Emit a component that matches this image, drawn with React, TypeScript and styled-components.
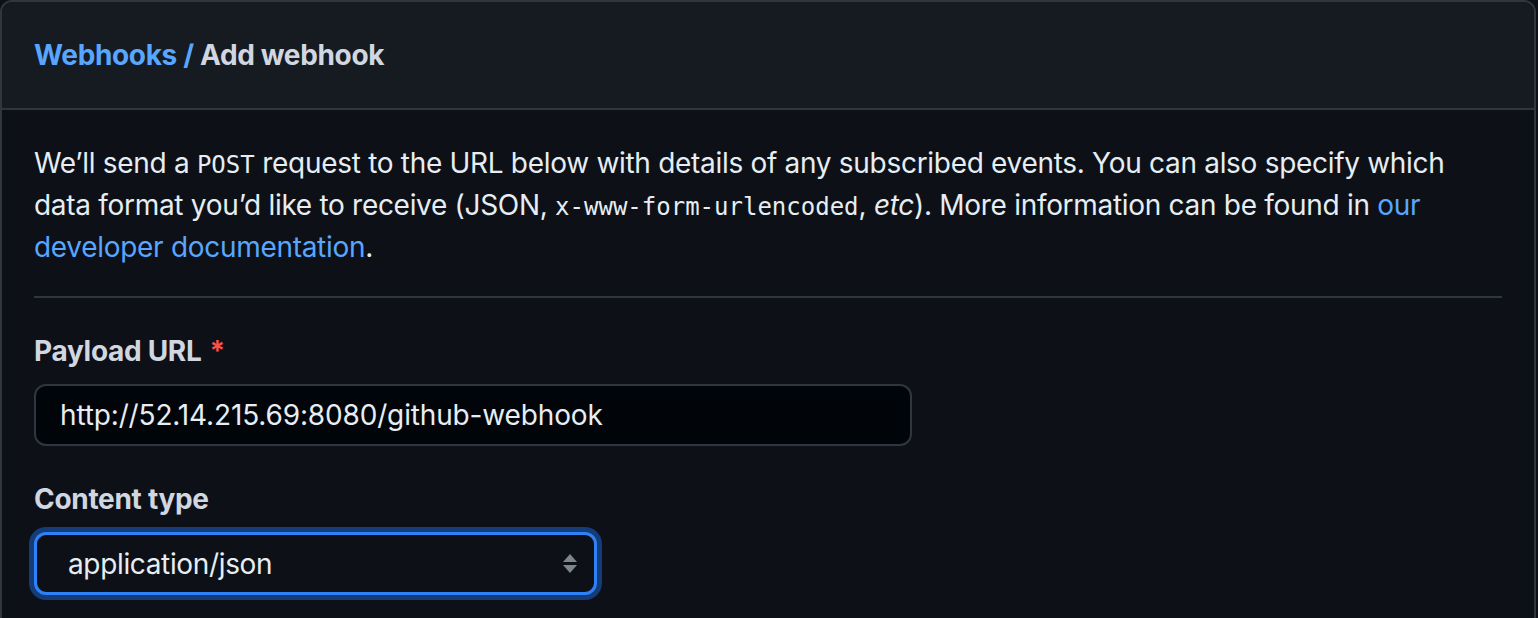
import React from "react";
import styled, { createGlobalStyle } from "styled-components";

const Global = createGlobalStyle`
  html, body { margin: 0; padding: 0; background: #0d1117; }
  body { font-family: Inter, "Noto Sans", sans-serif; color: #e6edf3; }
  * { box-sizing: border-box; }
`;

const Page = styled.div`
  width: 1538px;
  height: 618px;
  overflow: hidden;
  background: #0d1117;
`;

const Box = styled.div`
  width: 1536px;
  border: 2px solid #30363d;
  border-radius: 12px;
  background: #0d1117;
  overflow: hidden;
`;

const Header = styled.div`
  background: #161b22;
  border-bottom: 2px solid #30363d;
  padding: 32px 32px;
  font-size: 28px;
  line-height: 42px;
  font-weight: 700;
  letter-spacing: -0.35px;
  color: #d1d7e0;
`;

const Crumb = styled.a`
  color: #58a6ff;
  text-decoration: none;
`;

const Body = styled.div`
  padding: 32px 32px 40px;
`;

const Intro = styled.p`
  margin: 0 0 28px;
  font-size: 28px;
  line-height: 42px;
  letter-spacing: -0.3px;
  color: #e6edf3;
`;

const Code = styled.code`
  font-family: "DejaVu Sans Mono", "Liberation Mono", monospace;
  font-size: 24px;
  line-height: 1;
  letter-spacing: 0;
`;

const Link = styled.a`
  color: #58a6ff;
  text-decoration: none;
`;

const Rule = styled.hr`
  border: 0;
  height: 2px;
  background: #30363d;
  margin: 0 0 32px;
`;

const Field = styled.div`
  display: flex;
  flex-direction: column;
  gap: 12px;
  margin-bottom: 32px;
`;

const Label = styled.label`
  font-size: 28px;
  line-height: 42px;
  font-weight: 700;
  letter-spacing: -0.3px;
  color: #d1d7e0;
`;

const Required = styled.span`
  color: #f85149;
  margin-left: 8px;
`;

const TextInput = styled.div`
  width: 878px;
  height: 62px;
  background: #010409;
  border: 2px solid #30363d;
  border-radius: 12px;
  padding: 0 24px;
  display: flex;
  align-items: center;
  font-size: 28px;
  letter-spacing: -0.15px;
  color: #e6edf3;
`;

const Select = styled.div`
  width: 563px;
  height: 63px;
  background: #0d1117;
  border: 3px solid #2f81f7;
  border-radius: 12px;
  box-shadow: 0 0 0 5px #143c78;
  padding: 0 16px 0 31px;
  display: flex;
  align-items: center;
  justify-content: space-between;
  font-size: 28px;
  letter-spacing: -0.35px;
  color: #e6edf3;
`;

const Arrows = () => (
  <svg width="16" height="22" viewBox="0 0 16 22">
    <path d="M8 1 L15 9 H1 Z" fill="#7d8590" />
    <path d="M1 12 H15 L8 20 Z" fill="#7d8590" />
  </svg>
);

export default function App() {
  return (
    <Page>
      <Global />
      <Box>
        <Header>
          <Crumb href="#">Webhooks /</Crumb> Add webhook
        </Header>
        <Body>
          <Intro>
            We’ll send a <Code>POST</Code> request to the URL below with details of any
            subscribed events. You can also specify which data format you’d like to receive
            (JSON, <Code>x-www-form-urlencoded</Code>, <em>etc</em>). More information can be
            found in <Link href="#">our developer documentation</Link>.
          </Intro>
          <Rule />
          <Field>
            <Label>
              Payload URL<Required>*</Required>
            </Label>
            <TextInput>http://52.14.215.69:8080/github-webhook</TextInput>
          </Field>
          <Field>
            <Label>Content type</Label>
            <Select>
              <span>application/json</span>
              <Arrows />
            </Select>
          </Field>
        </Body>
      </Box>
    </Page>
  );
}
